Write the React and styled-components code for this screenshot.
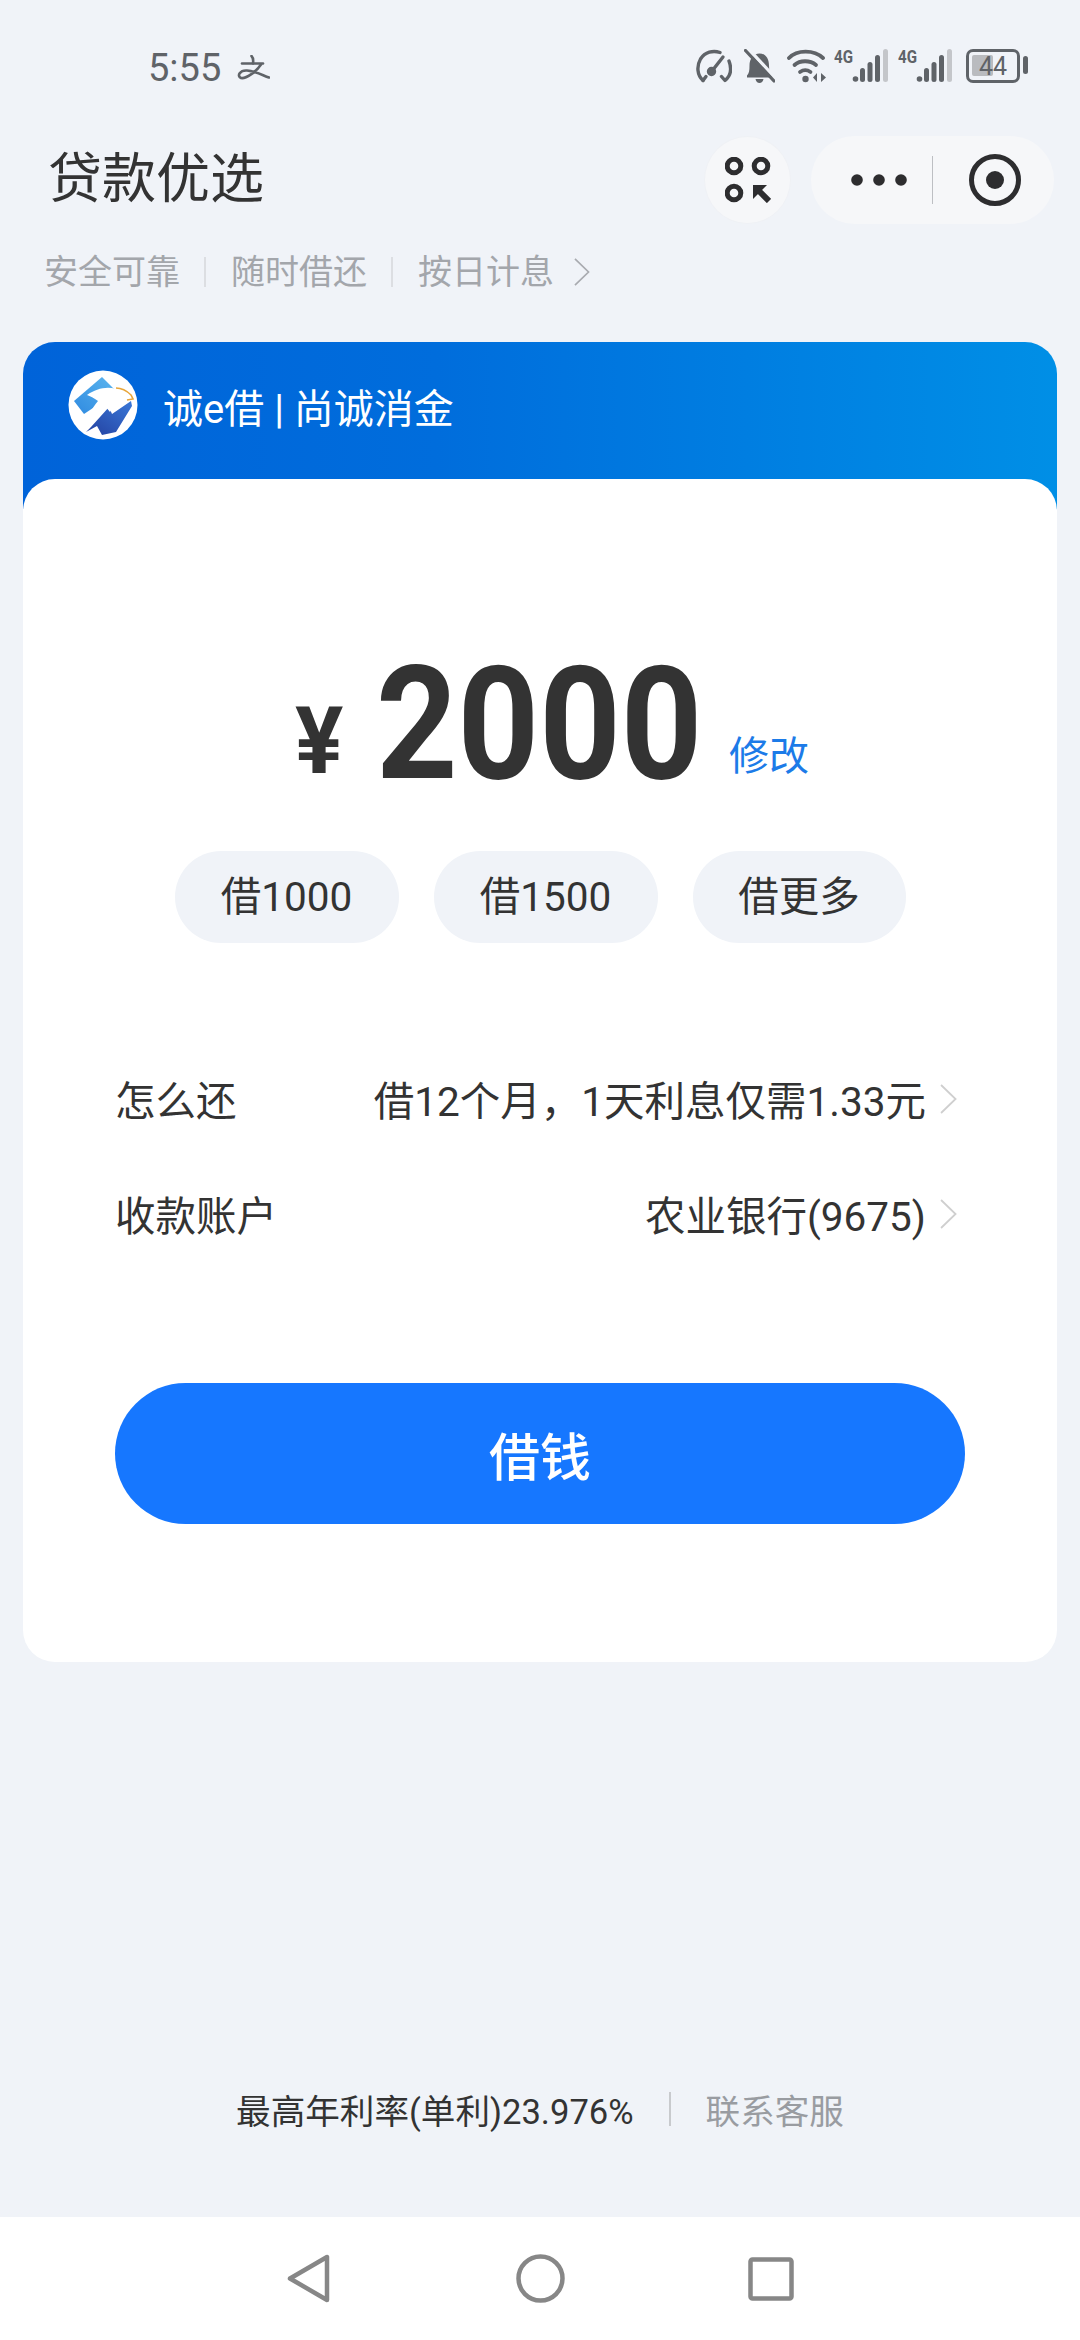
import React from "react";
import styled, { createGlobalStyle } from "styled-components";

const Global = createGlobalStyle`
  html, body { margin: 0; padding: 0; background: #f0f3f8; }
  * { box-sizing: border-box; }
  #root { width: 1080px; height: 2340px; }
`;
const SANS = `Roboto, "Noto Sans CJK SC", sans-serif`;

const Page = styled.div`
  width: 1080px; height: 2340px; display: flex; flex-direction: column;
  background: #f0f3f8; font-family: ${SANS}; color: #333;
`;
const StatusBar = styled.div`
  height: 136px; flex: none; display: flex; justify-content: space-between; align-items: flex-start;
  padding: 46px 52px 0 148px;
`;
const StatusLeft = styled.div`
  display: flex; align-items: center; gap: 16px; color: #5f6368; height: 44px;
`;
const Time = styled.span`font-size: 38px; line-height: 44px;`;
const StatusRight = styled.div`display: flex; align-items: flex-end; height: 34px; margin-top: 3px;`;
const StatusIcon = styled.span`display: flex; margin-left: ${p => p.$ml || 0}px;`;

const Header = styled.div`
  height: 88px; flex: none; display: flex; justify-content: space-between; align-items: center;
  padding: 0 26px 0 48px;
`;
const Title = styled.h1`margin: 0; font-size: 54px; font-weight: 400; color: #333; line-height: 88px;`;
const Capsules = styled.div`display: flex; gap: 20px; align-items: center;`;
const RoundBtn = styled.div`
  width: 87px; height: 88px; border-radius: 50%; background: #f6f7f9;
  border: 1px solid #eff1f5; display: flex; align-items: center; justify-content: center;
`;
const Capsule = styled.div`
  width: 243px; height: 88px; border-radius: 44px; background: #f6f7f9;
  display: flex; align-items: center; padding-left: 40px;
`;
const CapDiv = styled.div`width: 1px; height: 48px; background: #bdbfc3; margin: 0 36px 0 25px;`;

const Tags = styled.div`
  flex: none; margin-top: 23px; height: 50px; display: flex; align-items: center; padding-left: 44px;
  font-size: 34px; color: #a3a6ab;
`;
const Tag = styled.span`line-height: 50px; white-space: nowrap;`;
const TagDiv = styled.span`width: 2px; height: 30px; background: #dcdee2; margin: 0 25px 0 24px;`;
const TagArrow = styled.span`display: flex; margin-left: 20px;`;

const Card = styled.section`flex: none; margin: 45px 23px 0; height: 1320px; display: flex; flex-direction: column;`;
const CardHead = styled.div`
  height: 178px; flex: none; margin-bottom: -41px; border-radius: 32px 32px 0 0;
  background: linear-gradient(90deg, #0063d9 0%, #006ddc 40%, #008fe6 100%);
  display: flex; align-items: flex-start; padding: 28px 0 0 45px; gap: 25px;
`;
const Brand = styled.div`color: #fff; font-size: 40px; line-height: 80px; white-space: nowrap;`;
const Body = styled.div`
  position: relative; flex: 1; background: #fff; border-radius: 32px;
  display: flex; flex-direction: column; padding: 0 92px;
`;
const Amount = styled.div`
  margin-top: 167px; height: 156px; display: flex; align-items: flex-end; justify-content: flex-start;
  padding-left: 180px; color: #333;
`;
const Yen = styled.span`
  font-size: 92px; font-weight: 700; line-height: 104px; width: 81px; color: #333;
  transform: scaleX(.98); transform-origin: left bottom; position: relative; top: -8px;
`;
const Big = styled.span`
  font-size: 158px; font-weight: 700; line-height: 156px; width: 326px;
  transform: scaleX(.9); transform-origin: left bottom; white-space: nowrap; color: #333;
`;
const Edit = styled.span`font-size: 40px; color: #1c7be8; line-height: 56px; margin: 0 0 17px 27px;`;
const Pills = styled.div`display: flex; justify-content: center; gap: 35px; margin-top: 49px;`;
const Pill = styled.div`
  height: 92px; width: ${p => p.$w}px; border-radius: 46px; background: #f0f3f8;
  font-size: 40.5px; line-height: 92px; text-align: center; color: #333;
`;
const Rows = styled.div`display: flex; flex-direction: column; margin-top: 98px;`;
const Row = styled.div`
  height: 115px; display: flex; align-items: center; justify-content: space-between; font-size: 40.5px; color: #333;
  padding-right: 8px;
`;
const RowVal = styled.div`display: flex; align-items: center; gap: 14px; white-space: nowrap;`;
const Cta = styled.button`
  margin-top: 112px; width: 850px; height: 141px; border: 0; border-radius: 71px;
  background: #1677ff; color: #fff; font-family: ${SANS}; font-size: 51px; font-weight: 500; flex: none;
`;
const Spacer = styled.div`flex: 1;`;
const Footer = styled.div`
  flex: none; height: 60px; margin-bottom: 78px; display: flex; align-items: center; justify-content: center;
  font-size: 34.6px; color: #333;
`;
const FootDiv = styled.span`width: 2px; height: 34px; background: #c8cacd; margin: 0 35px;`;
const FootLink = styled.span`color: #999ca1;`;
const Nav = styled.nav`
  flex: none; height: 123px; background: #fff; display: flex; align-items: flex-start; justify-content: center; padding-top: 37px;
`;
const NavSlot = styled.div`width: 231px; height: 49px; display: flex; align-items: center; justify-content: center;`;

const Speed = () => (
  <svg width="36" height="34" viewBox="0 0 36 34" fill="none" stroke="#5f6368" strokeWidth="3.4" strokeLinecap="round" strokeLinejoin="round">
    <path d="M7 31.500C1 26 .5 17 4.500 10C9 3 17 1 24 3.500" />
    <path d="M33 12C36 20 34.500 27 29 31.500L25.500 27.500" />
    <path d="M7 31.500L10 27.500" />
    <path d="M16 22L27 8" />
    <circle cx="15.500" cy="22.500" r="3" fill="#5f6368" />
  </svg>
);
const Bell = () => (
  <svg width="31" height="34" viewBox="0 0 31 34">
    <path fill="#5f6368" d="M3 26.500c2-2 2.500-5 2.500-10 0-7 4-12 10-12s9.500 5 9.500 12c0 5 1 8 3 10v2H3z" />
    <path fill="#5f6368" d="M11.500 30h8c-.5 2.500-2 4-4 4s-3.500-1.500-4-4z" />
    <path d="M3.500 -1L34 32" stroke="#f0f3f8" strokeWidth="3.500" fill="none" />
    <path d="M1.500 1.500L30 32" stroke="#5f6368" strokeWidth="3.200" strokeLinecap="round" fill="none" />
  </svg>
);
const Wifi = () => (
  <svg width="40" height="34" viewBox="0 0 40 34" fill="none" stroke="#5f6368" strokeWidth="3.800" strokeLinecap="round">
    <path d="M2 9C10 .5 27 .5 36 9" />
    <path d="M7.500 16C13 11 23 11 29 16" />
    <path d="M13 23C16.500 20.500 20 20.500 23.500 23" />
    <circle cx="18.500" cy="30" r="3.200" fill="#5f6368" stroke="none" />
    <path d="M30 24v9l-4-4.500zM34 24v9l5-4.500z" fill="#5f6368" stroke="none" />
  </svg>
);
const NetText = styled.text`font: 700 19px ${SANS}; fill: #5f6368;`;
const Signal = () => (
  <svg width="54" height="42" viewBox="0 -8 54 42">
    <NetText x="0" y="14" textLength="19" lengthAdjust="spacingAndGlyphs">4G</NetText>
    <circle cx="21.500" cy="30" r="2.800" fill="#5f6368" />
    <rect x="26" y="19" width="5" height="14" rx="2.500" fill="#5f6368" />
    <rect x="33.500" y="13" width="5" height="20" rx="2.500" fill="#5f6368" />
    <rect x="41" y="6" width="5" height="27" rx="2.500" fill="#5f6368" />
    <rect x="49" y="0" width="5" height="33" rx="2.500" fill="#c4c6ca" />
  </svg>
);
const Battery = () => (
  <svg width="62" height="34" viewBox="0 0 62 34">
    <rect x="1.500" y="1.500" width="51" height="31" rx="5.500" fill="none" stroke="#5f6368" strokeWidth="3" />
    <rect x="6" y="6" width="21" height="21" rx="2" fill="#b9bbbf" />
    <rect x="57" y="7" width="5" height="18" rx="2.500" fill="#5f6368" />
    <text x="27" y="26" textAnchor="middle" fontFamily="Roboto, sans-serif" fontSize="25" fill="#5f6368">44</text>
  </svg>
);
const Zhi = () => (
  <svg width="33" height="26" viewBox="0 0 33 26" fill="none" stroke="#5f6368" strokeWidth="2.600" strokeLinecap="round">
    <path d="M5 8.500H26" />
    <path d="M14.500 1C16 2.500 16.500 5 16 8.500" />
    <path d="M24 9.500C19 17 9 24 4 23C-.5 21 3 15 10 15.500C18 16 25 20 32 22.500" />
  </svg>
);
const ScanIcon = () => (
  <svg width="46" height="46" viewBox="0 0 46 46" fill="none" stroke="#2d2d2f" strokeWidth="5">
    <circle cx="9" cy="9" r="6.800" />
    <circle cx="36" cy="9" r="6.800" />
    <circle cx="9" cy="36" r="6.800" />
    <path d="M28 28H42L28 42Z" fill="#2d2d2f" stroke="none" />
    <path d="M31 31L44 44" strokeWidth="6" />
  </svg>
);
const Dots = () => (
  <svg width="56" height="14" viewBox="0 0 56 14" fill="#2d2d2f">
    <circle cx="6" cy="7" r="5.800" />
    <circle cx="28" cy="7" r="5.800" />
    <circle cx="50" cy="7" r="5.800" />
  </svg>
);
const Target = () => (
  <svg width="52" height="52" viewBox="0 0 52 52">
    <circle cx="26" cy="26" r="23.500" fill="none" stroke="#2d2d2f" strokeWidth="5" />
    <circle cx="26" cy="26" r="9" fill="#2d2d2f" />
  </svg>
);
const Logo = () => (
  <svg width="70" height="70" viewBox="0 0 70 70" style={{ flex: "none" }}>
    <defs>
      <linearGradient id="lg1" x1="0" y1="1" x2="1" y2="0">
        <stop offset="0" stopColor="#2f8ae0" />
        <stop offset="1" stopColor="#5cb6ef" />
      </linearGradient>
      <linearGradient id="lg2" x1="0" y1="1" x2="1" y2="0">
        <stop offset="0" stopColor="#23409f" />
        <stop offset="1" stopColor="#3a78d8" />
      </linearGradient>
    </defs>
    <circle cx="35" cy="35" r="34.500" fill="#fff" />
    <path d="M6 31L34 7L49 22L16 44Z" fill="url(#lg1)" />
    <path d="M18 62L23 57L41 37L44 44L63 31L64 36L48 62L34 65L29 56Z" fill="url(#lg2)" />
    <path d="M19 25C28 19 38 16 48 19C56 21 60 24 64 28L58 30C52 30 47 33 45 37L42 42L37 36C28 42 22 50 16 60C19 48 24 38 30 31C26 28 22 26 19 25Z" fill="#fff" />
    <path d="M48 18C55 18 60 22 63 25L65 29L59 30" stroke="#e8a63a" strokeWidth="1.600" fill="none" />
  </svg>
);
const Chevron = ({ h = 30, c = "#cfcfcf" }) => (
  <svg width={h * 0.57} height={h} viewBox="0 0 17 30" fill="none" stroke={c} strokeWidth="1.800" style={{ flex: "none" }}>
    <path d="M1 1L15.500 15L1 29" />
  </svg>
);

export default function App() {
  return (
    <Page>
      <Global />
      <StatusBar>
        <StatusLeft><Time>5:55</Time><Zhi /></StatusLeft>
        <StatusRight>
          <StatusIcon><Speed /></StatusIcon>
          <StatusIcon $ml={12}><Bell /></StatusIcon>
          <StatusIcon $ml={12}><Wifi /></StatusIcon>
          <StatusIcon $ml={7}><Signal /></StatusIcon>
          <StatusIcon $ml={10}><Signal /></StatusIcon>
          <StatusIcon $ml={14}><Battery /></StatusIcon>
        </StatusRight>
      </StatusBar>
      <Header>
        <Title>贷款优选</Title>
        <Capsules>
          <RoundBtn><ScanIcon /></RoundBtn>
          <Capsule><Dots /><CapDiv /><Target /></Capsule>
        </Capsules>
      </Header>
      <Tags>
        <Tag>安全可靠</Tag><TagDiv /><Tag>随时借还</Tag><TagDiv /><Tag>按日计息</Tag>
        <TagArrow><Chevron h={28} c="#a9abb0" /></TagArrow>
      </Tags>
      <Card>
        <CardHead><Logo /><Brand>诚e借 | 尚诚消金</Brand></CardHead>
        <Body>
          <Amount><Yen>¥</Yen><Big>2000</Big><Edit>修改</Edit></Amount>
          <Pills>
            <Pill $w={224}>借1000</Pill>
            <Pill $w={224}>借1500</Pill>
            <Pill $w={213}>借更多</Pill>
          </Pills>
          <Rows>
            <Row><span>怎么还</span><RowVal>借12个月，1天利息仅需1.33元<Chevron /></RowVal></Row>
            <Row><span>收款账户</span><RowVal>农业银行(9675)<Chevron /></RowVal></Row>
          </Rows>
          <Cta>借钱</Cta>
        </Body>
      </Card>
      <Spacer />
      <Footer>最高年利率(单利)23.976%<FootDiv /><FootLink>联系客服</FootLink></Footer>
      <Nav>
        <NavSlot>
          <svg width="44" height="49" viewBox="0 0 44 49" fill="none" stroke="#878787" strokeWidth="4.500" strokeLinejoin="round">
            <path d="M40 3V46L3 24.500Z" />
          </svg>
        </NavSlot>
        <NavSlot>
          <svg width="49" height="49" viewBox="0 0 49 49" fill="none" stroke="#878787" strokeWidth="4.500"><circle cx="24.500" cy="24.500" r="22" /></svg>
        </NavSlot>
        <NavSlot>
          <svg width="46" height="44" viewBox="0 0 46 44" fill="none" stroke="#878787" strokeWidth="4.500" strokeLinejoin="round"><rect x="2.500" y="2.500" width="41" height="39" rx="2" /></svg>
        </NavSlot>
      </Nav>
    </Page>
  );
}
